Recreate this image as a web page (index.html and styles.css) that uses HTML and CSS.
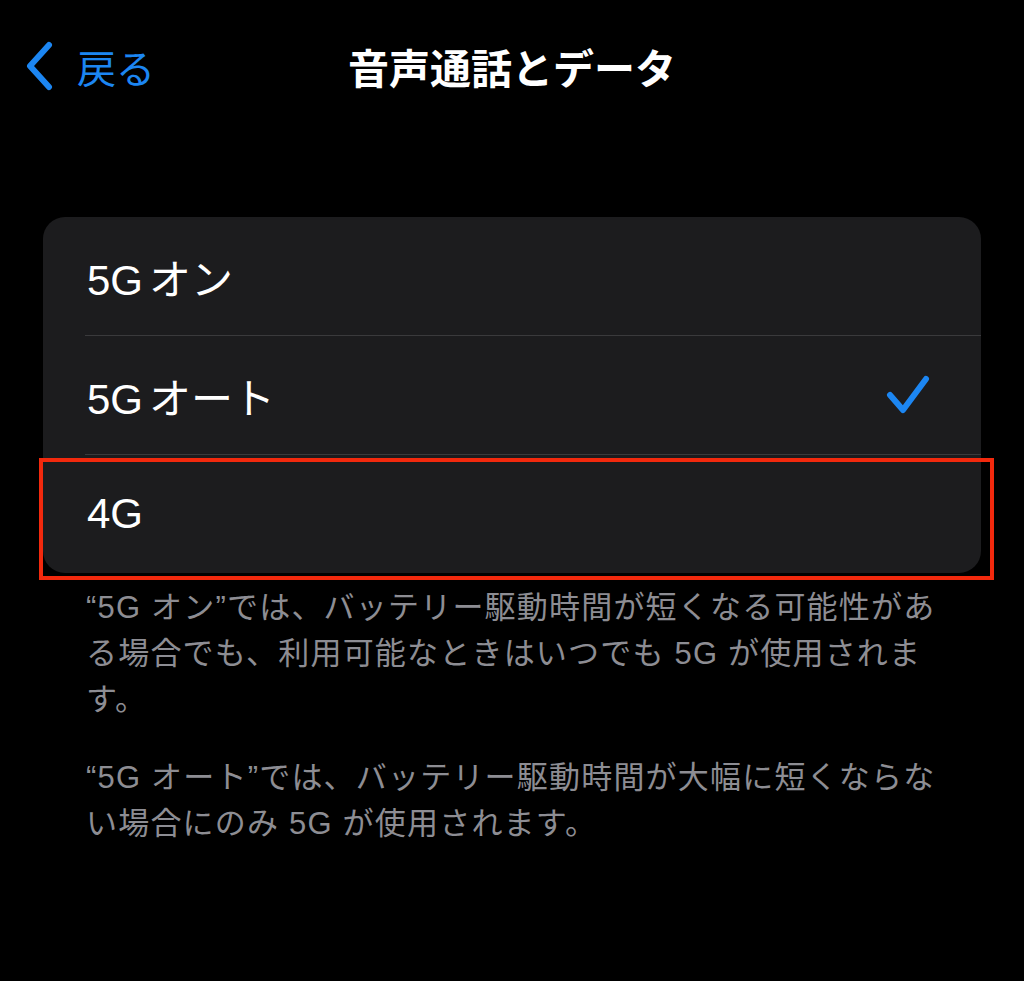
FILE: index.html
```
<!DOCTYPE html>
<html lang="ja">
<head>
  <meta charset="utf-8">
  <title>音声通話とデータ</title>
  <link rel="stylesheet" href="styles.css">
</head>
<body>
  <div class="nav">
    <a class="back" href="#">
      <svg class="chevron" width="30" height="50" viewBox="0 0 30 50">
        <path d="M24 4 L5 25 L24 46" fill="none" stroke="#1c86f2" stroke-width="6" stroke-linecap="round" stroke-linejoin="round"/>
      </svg>
      <span>戻る</span>
    </a>
    <h1 class="title">音声通話とデータ</h1>
    <div></div>
  </div>

  <div class="content">
    <div class="group">
      <div class="row"><span><span class="latin">5G</span>オン</span></div>
      <div class="sep"></div>
      <div class="row">
        <span><span class="latin">5G</span>オート</span>
        <svg class="check" width="46" height="42" viewBox="0 0 46 42">
          <path d="M5 21 L18 36 L41 5" fill="none" stroke="#1c86f2" stroke-width="6" stroke-linecap="round" stroke-linejoin="round"/>
        </svg>
      </div>
      <div class="sep"></div>
      <div class="row last">
        <span>4G</span>
        <div class="highlight"></div>
      </div>
    </div>

    <div class="notes">
      <p>“5G オン”では、バッテリー駆動時間が短くなる可能性がある場合でも、利用可能なときはいつでも 5G が使用されます。</p>
      <p>“5G オート”では、バッテリー駆動時間が大幅に短くならない場合にのみ 5G が使用されます。</p>
    </div>
  </div>
</body>
</html>
```

FILE: styles.css
```
body {
  margin: 0;
  background: #000;
  color: #fff;
  font-family: "Liberation Sans", "Noto Sans CJK JP", sans-serif;
  }
.nav {
  display: grid;
  grid-template-columns: 1fr auto 1fr;
  align-items: center;
  height: 132px;
  padding: 0 25px;
  }
.back {
  display: flex;
  align-items: center;
  gap: 22px;
  color: #1c86f2;
  text-decoration: none;
  font-size: 39px;
  }
.chevron {
  display: block;
  }
.title {
  margin: 0;
  font-size: 41px;
  font-weight: bold;
  }
.content {
  padding: 85px 43px 0 43px;
  }
.group {
  background: #1c1c1e;
  border-radius: 22px;
  }
.row {
  position: relative;
  display: flex;
  align-items: center;
  justify-content: space-between;
  height: 118px;
  padding: 0 50px 0 44px;
  font-size: 42px;
  }
.latin {
  margin-right: 6px;
  }
.sep {
  height: 1px;
  margin-left: 42px;
  background: #3a3a3c;
  }
.highlight {
  position: absolute;
  top: 3px;
  left: -4px;
  right: -13px;
  bottom: -7px;
  border: 4px solid #f2290d;
  }
.notes {
  padding: 12px 40px 0 43px;
  color: #8d8d93;
  font-size: 31px;
  line-height: 46px;
  letter-spacing: 1.2px;
  }
.notes p {
  margin: 0 0 32px 0;
  }
```
